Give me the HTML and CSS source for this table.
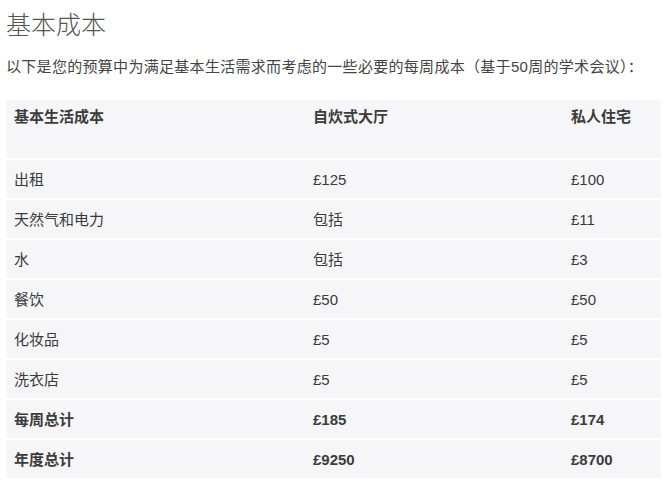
FILE: index.html
```html
<!DOCTYPE html>
<html lang="zh-CN">
<head>
<meta charset="utf-8">
<link rel="stylesheet" href="styles.css">
</head>
<body>
<h2 class="title">基本成本</h2>
<p class="intro">以下是您的预算中为满足基本生活需求而考虑的一些必要的每周成本（基于50周的学术会议）：</p>
<table class="costs">
  <thead>
    <tr class="head"><th>基本生活成本</th><th>自炊式大厅</th><th>私人住宅</th></tr>
  </thead>
  <tbody>
    <tr><td>出租</td><td>£125</td><td>£100</td></tr>
    <tr><td>天然气和电力</td><td>包括</td><td>£11</td></tr>
    <tr><td>水</td><td>包括</td><td>£3</td></tr>
    <tr><td>餐饮</td><td>£50</td><td>£50</td></tr>
    <tr><td>化妆品</td><td>£5</td><td>£5</td></tr>
    <tr><td>洗衣店</td><td>£5</td><td>£5</td></tr>
    <tr class="total"><td>每周总计</td><td>£185</td><td>£174</td></tr>
    <tr class="total"><td>年度总计</td><td>£9250</td><td>£8700</td></tr>
  </tbody>
</table>
</body>
</html>
```
FILE: styles.css
```css
html, body {
  margin: 0;
  padding: 0;
  background: #ffffff;
}
body {
  padding: 0 10px 0 6px;
  font-family: "Liberation Sans", "Noto Sans CJK SC", sans-serif;
  color: #3a3a3a;
}
.title {
  margin: 0;
  padding-top: 7px;
  font-family: "Noto Sans CJK SC", sans-serif;
  font-weight: 300;
  font-size: 25px;
  line-height: 32px;
  color: #555555;
}
.intro {
  margin: 18px 0 0 0;
  font-size: 15px;
  line-height: 20px;
  letter-spacing: 0.3px;
  color: #444444;
  white-space: nowrap;
}
.costs {
  margin-top: 21px;
  width: 655px;
  border-collapse: separate;
  border-spacing: 0 2px;
  font-size: 15px;
  line-height: 20px;
}
.costs th, .costs td {
  box-sizing: border-box;
  background: #f6f6f8;
  text-align: left;
  padding: 2px 0 0 8px;
  height: 38px;
  vertical-align: middle;
}
.costs th {
  height: 58px;
  vertical-align: top;
  padding-top: 7px;
  font-weight: bold;
  color: #3c3c3c;
}
.costs th:nth-child(1), .costs td:nth-child(1) { width: 299px; }
.costs th:nth-child(2), .costs td:nth-child(2) { width: 258px; }
.total td {
  font-weight: bold;
  color: #3c3c3c;
}
```
